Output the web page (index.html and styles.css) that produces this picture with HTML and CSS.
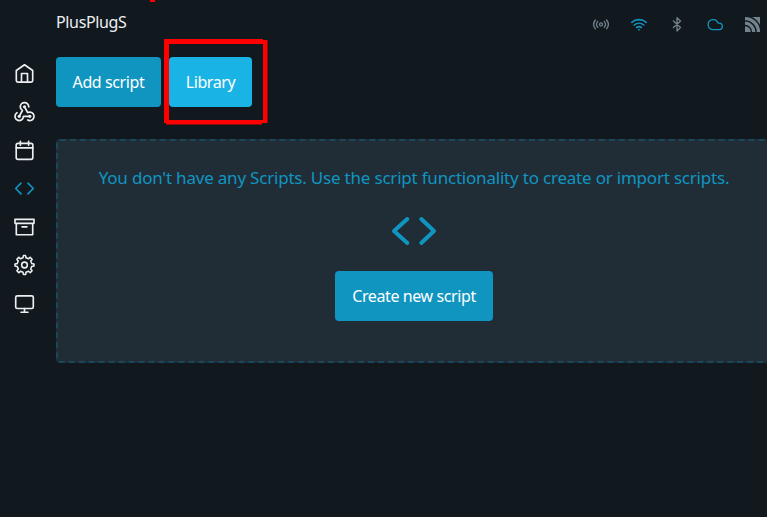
FILE: index.html
```
<!DOCTYPE html>
<html lang="en">
<head>
<meta charset="utf-8">
<title>PlusPlugS</title>
<link rel="stylesheet" href="styles.css">
</head>
<body>
<div class="app">
  <nav class="sidebar">
    <a><svg viewBox="0 0 25 25"><path d="M4.3 9.5 12.5 3.8l8.2 5.7v10a1.6 1.6 0 0 1-1.6 1.6H5.9a1.6 1.6 0 0 1-1.6-1.6zM9.5 21v-8.5h6V21"/></svg></a>
    <a><svg viewBox="0 0 25 25"><g transform="translate(-.2 -.7) scale(1.06)"><path d="M4.876 13.61a4 4 0 1 0 6.124 3.39h6M15.066 20.502a4 4 0 1 0 1.934-7.502c-.706 0-1.424.179-2 .5l-3-5.5M16 8a4 4 0 1 0-8 0c0 1.506.77 2.818 2 3.5l-3 5.5"/><g class="dots"><circle cx="12" cy="8" r="1.5"/><circle cx="7" cy="17" r="1.5"/><circle cx="17" cy="17" r="1.5"/></g></g></svg></a>
    <a><svg viewBox="0 0 25 25"><rect x="4.2" y="5.3" width="16.6" height="16" rx="1.8"/><path d="M4.2 9.9h16.6M8.4 3.3v4M16.6 3.3v4"/></svg></a>
    <a class="active"><svg viewBox="0 0 25 25"><path d="M9 7.2 3.7 12.5 9 17.8M16 7.2l5.3 5.3L16 17.8"/></svg></a>
    <a><svg viewBox="0 0 25 25"><path d="M3 5.3h19v4H3zM4.3 9.3v11.4h16.4V9.3M10 12.8h5"/></svg></a>
    <a><svg viewBox="0 0 25 25"><g transform="translate(1.1 1.6) scale(.95)"><circle cx="12" cy="12" r="3"/><path d="M19.62 10.4 18.52 7.74C18.9 7.1 20 6.9 20 6L18 4C17.4 4 17 5.2 16.26 5.48L13.56 4.37C13.2 3.8 13.5 2 12.94 2H10.98C10.4 2 10.8 3.8 10.35 4.4L7.7 5.52C7 5.3 6.7 4 6 4L4 6C4 6.8 5.2 7.1 5.45 7.79L4.37 10.45C3.8 10.9 2 10.4 2 11V13C2 13.6 3.8 13.2 4.4 13.66L5.52 16.3C5.3 17 4 17.3 4 18L6 20C6.7 20 7.1 18.8 7.79 18.54L10.4 19.61C10.9 20.2 10.4 22 11 22H13C13.6 22 13.2 20.2 13.6 19.61L16.26 18.52C16.9 18.8 17.3 20 18 20L20 18C20 17.3 18.8 16.9 18.52 16.25L19.61 13.6C20.2 13.2 22 13.6 22 12.98V11C22 10.4 20.2 10.8 19.62 10.4Z"/></g></svg></a>
    <a><svg viewBox="0 0 25 25"><rect x="3.7" y="4.9" width="17.6" height="12.6" rx="1.6"/><path d="M12.5 17.5V21M9 21.2h7"/></svg></a>
  </nav>
  <main>
    <header>
      <h1>PlusPlugS</h1>
      <div class="status">
        <svg viewBox="0 0 16 16"><circle cx="8" cy="8.4" r="1.5"/><path d="M2.4 4a7 7 0 0 0 0 8.8M4.8 5.4a4.5 4.5 0 0 0 0 6M11.2 5.4a4.5 4.5 0 0 1 0 6M13.6 4a7 7 0 0 1 0 8.8"/></svg>
        <svg class="on wifi" viewBox="0 0 16 16"><path d="M.7 6.3a11.3 11.3 0 0 1 14.6 0M3.2 9a7.6 7.6 0 0 1 9.6 0M5.7 11.5a3.8 3.8 0 0 1 4.6 0M7.8 13.8h.4"/></svg>
        <svg viewBox="0 0 16 16"><path d="m4.4 4.9 7.2 6.5L8 15V1.6l3.6 3.5-7.2 6.5"/></svg>
        <svg class="on" viewBox="0 0 16 16"><path d="M5.7 13.6a5 5 0 1 1 5.2-6.5h1.2a3.25 3.25 0 0 1 0 6.5z"/></svg>
        <svg class="rss" viewBox="0 0 16 16"><rect x="0" y="1" width="15" height="15"/><path d="M0 9.5A6.5 6.5 0 0 1 6.5 16M0 4.9A11.1 11.1 0 0 1 11.1 16M0 .2A15.8 15.8 0 0 1 15.8 16"/></svg>
      </div>
    </header>
    <div class="actions">
      <button class="add">Add script</button>
      <button class="library">Library</button>
      <svg class="marker" viewBox="0 0 104 86"><path d="M0 0h99v1h4.5v83H98v1.5H2V84H0zM5 5v76h94V5z" fill-rule="evenodd"/></svg>
    </div>
    <section class="empty">
      <p>You don't have any Scripts. Use the script functionality to create or import scripts.</p>
      <svg viewBox="0 0 48 32"><path d="M17.3 4 4 16l13.3 12M31.3 4 44 16 31.3 28"/></svg>
      <button class="create">Create new script</button>
    </section>
  </main>
  <i class="mark"></i>
</div>
</body>
</html>
```
FILE: styles.css
```
* { box-sizing: border-box; }
body {
  margin: 0;
  background: #11191f;
  color: #edf0f3;
  font: 16px/24px "Noto Sans", sans-serif;
  overflow: hidden;
}
svg {
  fill: none;
  stroke: currentColor;
  stroke-width: 1.65;
  stroke-linecap: round;
  stroke-linejoin: round;
}
.app { position: relative; display: flex; height: 517px; overflow: hidden; }
.sidebar { flex: none; width: 56px; padding: 61px 0 0 12px; }
.sidebar a { display: block; height: 38.25px; }
.sidebar svg { display: block; width: 25px; height: 25px; }
.sidebar .active, .on { color: #1095c1; }
.dots { fill: currentColor; stroke: none; }
main { flex: none; width: 716px; }
header { display: flex; justify-content: space-between; height: 57px; padding: 10px 11px 0 0; }
h1 { margin: 0; font-size: 16px; font-weight: 400; letter-spacing: -.35px; }
.status { display: flex; gap: 22px; padding-top: 6px; color: #73828c; }
.status svg { width: 16px; height: 16px; stroke-width: 1.3; }
.status .wifi { stroke-width: 1.6; }
.status .rss { stroke: #11191f; stroke-width: 1.4; stroke-linecap: butt; }
.rss rect { fill: currentColor; stroke: none; }
.actions { position: relative; display: flex; gap: 8px; height: 82px; }
button {
  height: 50px;
  padding: 0;
  border: 0;
  border-radius: 4px;
  background: #1095c1;
  color: #fff;
  font: inherit;
  letter-spacing: -.4px;
  white-space: nowrap;
}
.add { width: 105px; }
.library { width: 83px; background: #1ab3e6; }
.marker { position: absolute; left: 108px; top: -18px; width: 104px; height: 86px; fill: #f00; stroke: none; }
.empty {
  display: flex;
  flex-direction: column;
  align-items: center;
  height: 224px;
  padding-top: 25px;
  border: 2px dashed #1a475a;
  border-radius: 4px;
  background: #202d37;
}
.empty p { margin: 0; color: #1095c1; font-size: 17px; letter-spacing: -.205px; white-space: nowrap; }
.empty svg { width: 48px; height: 32px; margin: 25px 0 24px; color: #1095c1; stroke-width: 4; }
.create { width: 158px; }
.mark { position: absolute; left: 150px; top: 0; width: 5px; height: 2px; background: #f00; }
```
